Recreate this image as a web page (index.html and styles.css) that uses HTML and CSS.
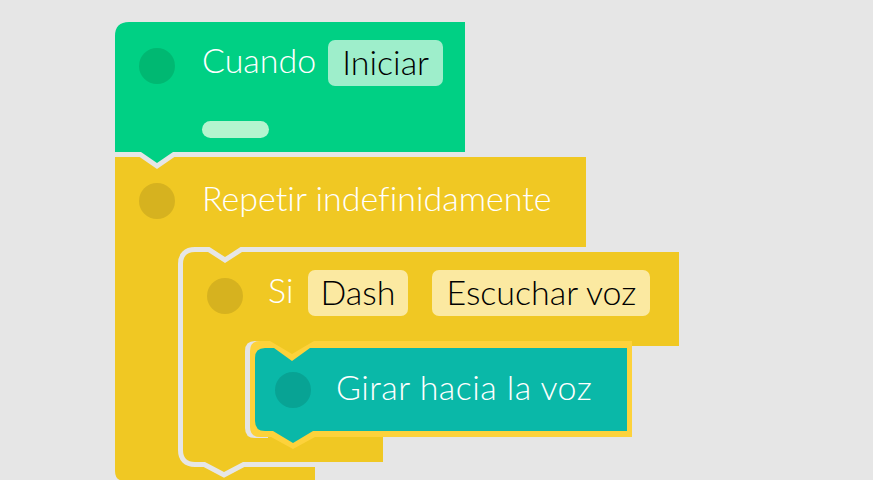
FILE: index.html
```html
<!DOCTYPE html>
<html lang="es">
<head>
<meta charset="utf-8">
<title>Bloques</title>
<link rel="stylesheet" href="styles.css">
</head>
<body>
<div class="canvas">
  <svg class="shapes" width="873" height="480" viewBox="0 0 873 480" aria-hidden="true">
    <!-- Repetir indefinidamente (outer C block) -->
    <path class="blk-yellow" d="M115,157 H586 V247 H250 V440 H315 V481 H125 Q115,481 115,471 Z"/>
    <!-- Si (inner C block) -->
    <path class="blk-yellow outlined" d="M195,252 H208 L225,263 L242,252 H679 V346 H316 L292,360 L268,346 H252 V430 H383 V462 H243 L224,472 L205,462 H195 Q183,462 183,450 V264 Q183,252 195,252 Z"/>
    <!-- Girar hacia la voz -->
    <path class="teal-shadow" d="M255,341 H268 V438 H255 Q245,438 245,428 V351 Q245,341 255,341 Z"/>
    <path class="teal-border" d="M260,341 H270 L292,354 L314,341 H632 V437 H315 L293,449 L271,437 H260 Q250,437 250,427 V351 Q250,341 260,341 Z"/>
    <path class="teal-fill" d="M265,348 H274 L292,361 L310,348 H627 V431 H313 L293,443 L273,431 H265 Q255,431 255,421 V358 Q255,348 265,348 Z"/>
    <!-- Cuando Iniciar (hat block) -->
    <path class="blk-green outlined" d="M129,22 H465 V152 H173 L157,163 L141,152 H115 V36 Q115,22 129,22 Z"/>
  </svg>

  <div class="row row-when">
    <span class="dot dot-green dot-low"></span>
    <span class="label">Cuando</span>
    <span class="chip chip-green">Iniciar</span>
  </div>
  <span class="pill"></span>

  <div class="row row-repeat">
    <span class="dot dot-yellow"></span>
    <span class="label">Repetir indefinidamente</span>
  </div>

  <div class="row row-if">
    <span class="dot dot-yellow dot-low"></span>
    <span class="label label-si">Si</span>
    <span class="chip chip-yellow chip-dash">Dash</span>
    <span class="chip chip-yellow chip-wide">Escuchar voz</span>
  </div>

  <div class="row row-turn">
    <span class="dot dot-teal"></span>
    <span class="label label-turn">Girar hacia la voz</span>
  </div>
</div>
</body>
</html>
```

FILE: styles.css
```css
html, body {
  margin: 0;
  padding: 0;
}

body {
  background: #e6e6e6;
  width: 873px;
  height: 480px;
  overflow: hidden;
  font-family: Lato, "Noto Sans", sans-serif;
  font-weight: 300;
  font-variant-ligatures: none;
  font-feature-settings: "liga" 0, "dlig" 0;
}

.canvas {
  position: relative;
  width: 873px;
  height: 480px;
}

.shapes {
  position: absolute;
  left: 0;
  top: 0;
}

.blk-yellow { fill: #f0c823; }
.blk-green { fill: #00d084; }
.outlined {
  stroke: #e6e6e6;
  stroke-width: 10;
  paint-order: stroke;
  stroke-linejoin: miter;
}
.teal-shadow { fill: #e4e4e4; }
.teal-border { fill: #fdd23b; }
.teal-fill { fill: #0ab8a8; }

.row {
  position: absolute;
  display: flex;
  align-items: center;
  height: 46px;
}

.row-when { left: 139px; top: 40px; }
.row-repeat { left: 139px; top: 178px; }
.row-if { left: 207px; top: 270px; }
.row-turn { left: 275px; top: 367px; }

.dot {
  flex: none;
  width: 36px;
  height: 36px;
  border-radius: 50%;
  margin-right: 27px;
}
.dot-low { position: relative; top: 3px; }
.dot-green { background: #00b872; }
.dot-yellow { background: #d6b21f; }
.dot-teal { background: #08a394; }

.label {
  color: #ffffff;
  font-size: 34px;
  line-height: 46px;
  white-space: nowrap;
  position: relative;
  top: -3px;
}
.label-si { margin-left: -2px; }
.label-turn { margin-left: -2px; letter-spacing: 0.45px; }

.chip {
  height: 46px;
  line-height: 44px;
  border-radius: 7px;
  padding: 0 14px;
  font-size: 34px;
  color: #000000;
  white-space: nowrap;
  margin-left: 12px;
}
.chip-green { background: #9eeecb; }
.chip-yellow { background: #fbe9a1; }
.chip-dash { margin-left: 14px; padding: 0 13px; }
.chip-wide { margin-left: 24px; }

.pill {
  position: absolute;
  left: 202px;
  top: 121px;
  width: 67px;
  height: 17px;
  border-radius: 9px;
  background: #b4f5cf;
}
```
